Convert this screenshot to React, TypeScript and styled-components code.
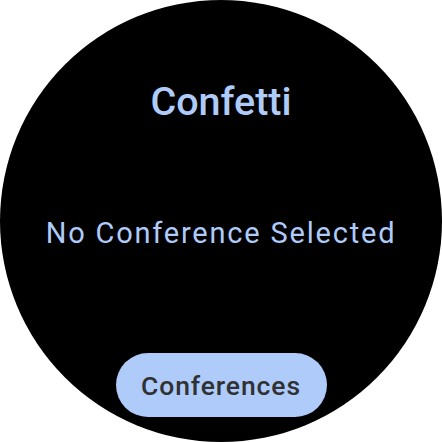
import React from "react";
import styled, { createGlobalStyle } from "styled-components";

const Global = createGlobalStyle`
  html, body { margin: 0; padding: 0; background: #ffffff; }
  body { font-family: Roboto, "Noto Sans", sans-serif; }
`;

const Screen = styled.div`
  width: 442px;
  height: 442px;
  border-radius: 50%;
  background: #000000;
  display: flex;
  flex-direction: column;
  align-items: center;
  box-sizing: border-box;
  padding-top: 77px;
`;

const Title = styled.div`
  color: #aecbfa;
  font-family: Roboto, sans-serif;
  font-weight: 500;
  font-size: 39.5px;
  line-height: 50px;
`;

const Message = styled.div`
  margin-top: 88px;
  color: #aecbfa;
  font-family: Roboto, sans-serif;
  font-weight: 400;
  font-size: 29px;
  letter-spacing: 1.8px;
  line-height: 36px;
  white-space: nowrap;
`;

const Chip = styled.button`
  margin-top: 102px;
  width: 211px;
  height: 64px;
  flex-shrink: 0;
  border: none;
  border-radius: 32px;
  background: #aecbfa;
  color: #303133;
  font-family: Roboto, sans-serif;
  font-weight: 500;
  font-size: 26.5px;
  letter-spacing: 0.9px;
  padding: 0;
  display: flex;
  align-items: center;
  justify-content: center;
`;

export default function App() {
  return (
    <>
      <Global />
      <Screen>
        <Title>Confetti</Title>
        <Message>No Conference Selected</Message>
        <Chip>Conferences</Chip>
      </Screen>
    </>
  );
}
